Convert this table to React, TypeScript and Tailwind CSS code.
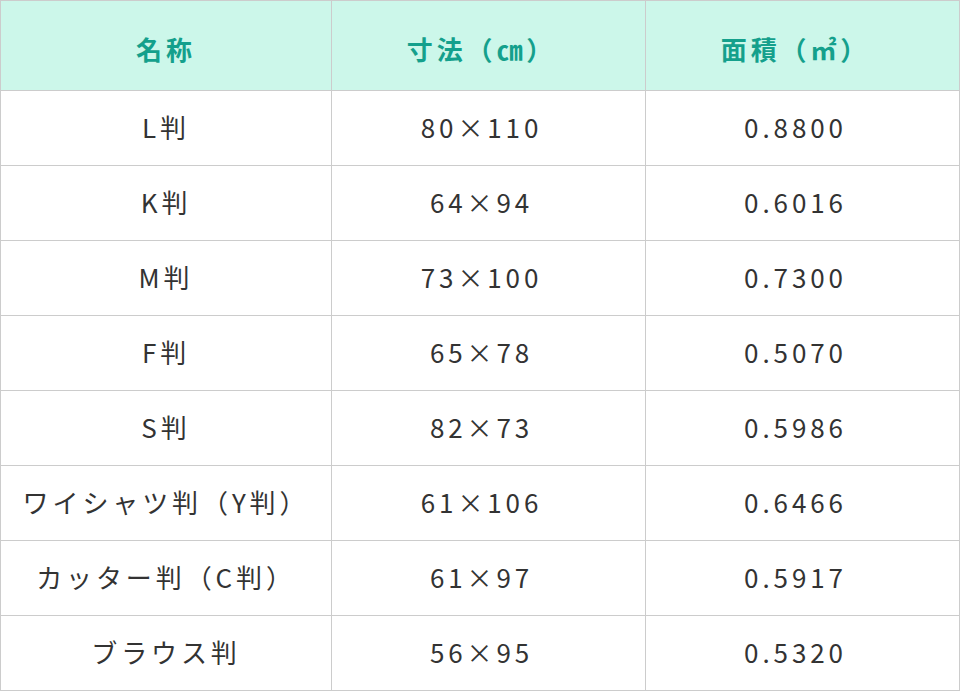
const rows = [
  ["L判", "80×110", "0.8800"],
  ["K判", "64×94", "0.6016"],
  ["M判", "73×100", "0.7300"],
  ["F判", "65×78", "0.5070"],
  ["S判", "82×73", "0.5986"],
  ["ワイシャツ判（Y判）", "61×106", "0.6466"],
  ["カッター判（C判）", "61×97", "0.5917"],
  ["ブラウス判", "56×95", "0.5320"],
];

export default function App() {
  return (
    <div className="w-[960px] bg-white font-['Noto_Sans_CJK_JP','Noto_Sans',sans-serif] text-[26px] tracking-[0.15em] text-[#333]">
      <div className="border border-[#cccccc]">
        {/* Header */}
        <div className="grid grid-cols-[330px_314px_1fr] h-[89px] bg-[#ccf7ea] font-bold text-[#14a08c]">
          <div className="flex items-center justify-center pt-[6px]">名称</div>
          <div className="flex items-center justify-center border-l border-[#cccccc] pr-[14px] pt-[6px]">寸法（㎝）</div>
          <div className="flex items-center justify-center border-l border-[#cccccc] pr-[14px] pt-[6px]">面積（㎡）</div>
        </div>
        {rows.map((r) => (
          <div key={r[0]} className="grid grid-cols-[330px_314px_1fr] h-[75px] border-t border-[#cccccc]">
            <div className="flex items-center justify-center pb-[3px]">{r[0]}</div>
            <div className="flex items-center justify-center border-l border-[#cccccc] pr-[14px] pb-[3px]">{r[1]}</div>
            <div className="flex items-center justify-center border-l border-[#cccccc] pr-[14px] pb-[3px]">{r[2]}</div>
          </div>
        ))}
      </div>
    </div>
  );
}
